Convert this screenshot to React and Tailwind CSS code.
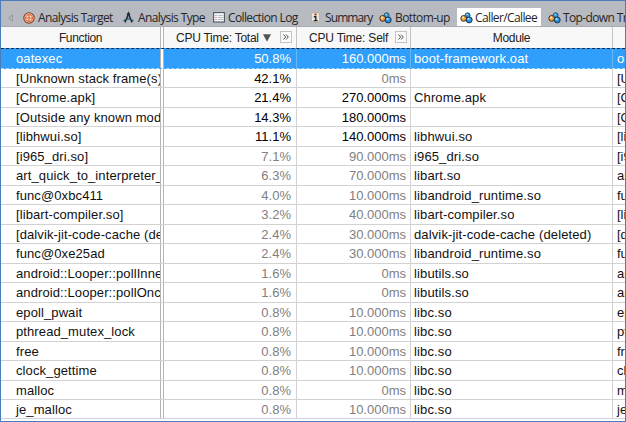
import React from "react";

const rows = [
  ["oatexec", "50.8%", "160.000ms", "boot-framework.oat"],
  ["[Unknown stack frame(s)]", "42.1%", "0ms", ""],
  ["[Chrome.apk]", "21.4%", "270.000ms", "Chrome.apk"],
  ["[Outside any known module]", "14.3%", "180.000ms", ""],
  ["[libhwui.so]", "11.1%", "140.000ms", "libhwui.so"],
  ["[i965_dri.so]", "7.1%", "90.000ms", "i965_dri.so"],
  ["art_quick_to_interpreter_bridge", "6.3%", "70.000ms", "libart.so"],
  ["func@0xbc411", "4.0%", "10.000ms", "libandroid_runtime.so"],
  ["[libart-compiler.so]", "3.2%", "40.000ms", "libart-compiler.so"],
  ["[dalvik-jit-code-cache (deleted)]", "2.4%", "30.000ms", "dalvik-jit-code-cache (deleted)"],
  ["func@0xe25ad", "2.4%", "30.000ms", "libandroid_runtime.so"],
  ["android::Looper::pollInner", "1.6%", "0ms", "libutils.so"],
  ["android::Looper::pollOnce", "1.6%", "0ms", "libutils.so"],
  ["epoll_pwait", "0.8%", "10.000ms", "libc.so"],
  ["pthread_mutex_lock", "0.8%", "10.000ms", "libc.so"],
  ["free", "0.8%", "10.000ms", "libc.so"],
  ["clock_gettime", "0.8%", "10.000ms", "libc.so"],
  ["malloc", "0.8%", "0ms", "libc.so"],
  ["je_malloc", "0.8%", "10.000ms", "libc.so"],
];

const GRID = "grid grid-cols-[163px_133px_114px_202px_12px]";

function TargetIcon() {
  return (
    <svg width="12" height="12" viewBox="0 0 12 12" fill="none">
      <circle cx="6" cy="6" r="5.2" fill="#fbe9dd" stroke="#7d3a24" strokeWidth="1.1" />
      <circle cx="6" cy="6" r="3.4" stroke="#e8703f" strokeWidth="1.2" />
      <path d="M6 1.2v9.6M1.2 6h9.6" stroke="#dd6233" strokeWidth="1.1" />
    </svg>
  );
}

function CompassIcon() {
  return (
    <svg width="11" height="13" viewBox="0 0 11 13" fill="none">
      <path d="M5.5 0.8v2" stroke="#222" strokeWidth="1.3" />
      <path d="M5.5 3L2 11.4M5.5 3l3.5 8.4" stroke="#20262c" strokeWidth="1.5" />
      <circle cx="5.5" cy="3.4" r="1.7" fill="#27323b" />
      <path d="M0.6 10Q5.5 5.8 10.4 10" stroke="#28566e" strokeWidth="1.2" />
    </svg>
  );
}

function LogIcon() {
  return (
    <svg width="12" height="11" viewBox="0 0 12 11" fill="none">
      <rect x="0.6" y="0.6" width="10.8" height="9.4" fill="#f4f6f7" stroke="#4c5864" strokeWidth="1.1" />
      <path d="M2.2 3.5h1.6M2.2 5.5h1.6M2.2 7.5h1.6" stroke="#d29386" />
      <path d="M5 3.5h5M5 5.5h5M5 7.5h5" stroke="#b4c0c9" />
    </svg>
  );
}

function InfoIcon() {
  return (
    <svg width="9" height="11" viewBox="0 0 9 11" fill="none">
      <rect x="0.6" y="0.6" width="7.8" height="9.4" rx="1.5" fill="#eee9df" stroke="#b3a994" strokeWidth="0.8" />
      <circle cx="4.5" cy="2.4" r="1.2" fill="#a94d1d" />
      <path d="M2.8 4.7h2v3.8M2.6 8.6h4" stroke="#22252a" strokeWidth="1.4" />
    </svg>
  );
}

function BallsIcon() {
  return (
    <svg width="13" height="12" viewBox="0 0 13 12" fill="none">
      <circle cx="7.6" cy="3.3" r="2.5" fill="#2f9fe0" stroke="#1a3c58" strokeWidth="0.8" />
      <circle cx="3.7" cy="6.4" r="2.9" fill="#f0a040" stroke="#33241a" strokeWidth="0.9" />
      <circle cx="9.2" cy="7.9" r="3" fill="#2b8fdc" stroke="#102e48" strokeWidth="0.9" />
      <circle cx="3.1" cy="5.6" r="1.1" fill="#ffe9b8" />
      <circle cx="8.5" cy="7" r="1.1" fill="#b8e8fb" />
      <circle cx="7" cy="2.6" r="0.8" fill="#a4e0f6" />
    </svg>
  );
}

function Tab({ icon, label, className, iconClass }) {
  return (
    <div className={"flex h-[19px] shrink-0 items-center whitespace-nowrap " + className}>
      <span className={"flex shrink-0 items-center " + iconClass}>{icon}</span>
      <span className="leading-[19px]">{label}</span>
    </div>
  );
}

function Expand() {
  return (
    <span className="flex h-[12px] w-[12px] shrink-0 items-center justify-center border border-[#c4c4c4] bg-[#fafafa]">
      <svg width="6" height="6" viewBox="0 0 6 6" fill="none" stroke="#555" strokeWidth="1">
        <path d="M0.5 0.5L2.7 3L0.5 5.5M3.1 0.5L5.3 3L3.1 5.5" />
      </svg>
    </span>
  );
}

function Row({ row, selected }) {
  const [name, total, self, module] = row;
  const totalColor = selected ? "" : parseFloat(total) > 10 ? "text-black" : "text-[#808080]";
  const selfColor = selected ? "" : parseFloat(self) > 100 ? "text-black" : "text-[#808080]";
  const line = selected ? "border-[#68b8f4]" : "border-[#d2d2d2]";
  return (
    <div
      className={
        GRID +
        " shrink-0 whitespace-nowrap text-[13px] leading-[19px] " +
        (selected
          ? "h-[21px] border-y border-dashed border-t-[#0f2a44] border-b-[#a5d5f8] bg-[#2f9ffb] text-white"
          : "h-[19.47px] border-b border-[#d2d2d2] text-[#111]")
      }
    >
      <div className="flex overflow-hidden">
        <div className="w-[159px] overflow-hidden pl-[15px] tracking-[0.1px]">{name}</div>
        <div className="w-[4px] shrink-0 border-x border-solid border-[#b4b4b4] bg-white" />
      </div>
      <div className={"overflow-hidden border-r border-solid pr-[5px] text-right " + line + " " + totalColor}>{total}</div>
      <div className={"overflow-hidden border-r border-solid pr-[4px] text-right " + line + " " + selfColor}>{self}</div>
      <div className={"overflow-hidden border-r border-solid pl-[3px] tracking-[0.13px] " + line}>{module}</div>
      <div className="overflow-hidden pl-[4px]">{name}</div>
    </div>
  );
}

export default function App() {
  return (
    <div className="flex h-[422px] w-[626px] flex-col overflow-hidden border border-[#4a7ebb] bg-white font-['Liberation_Sans',Arial,sans-serif]">
      <div className="flex h-[26px] shrink-0 overflow-hidden border-b border-[#a9acb2] bg-[#b7bac1] pt-[7px] font-['Open_Sans','Noto_Sans',sans-serif] text-[12px] tracking-[-0.62px] text-[#262626]">
        <div className="flex h-[19px] w-[22px] shrink-0 items-center pl-[7px]">
          <svg width="5" height="8" viewBox="0 0 5 8" fill="none" stroke="#8b8e94" strokeWidth="0.8">
            <path d="M4.4 0.8v6.4L0.6 4z" />
          </svg>
        </div>
        <Tab icon={<TargetIcon />} label="Analysis Target" className="w-[100px]" iconClass="w-[15px]" />
        <Tab icon={<CompassIcon />} label="Analysis Type" className="w-[90px]" iconClass="w-[15px]" />
        <Tab icon={<LogIcon />} label="Collection Log" className="w-[98px]" iconClass="w-[15px]" />
        <Tab icon={<InfoIcon />} label="Summary" className="w-[68px] tracking-[-0.9px]" iconClass="w-[14px]" />
        <Tab icon={<BallsIcon />} label="Bottom-up" className="w-[78px]" iconClass="w-[16px]" />
        <Tab icon={<BallsIcon />} label="Caller/Callee" className="h-[18px] w-[84px] bg-white pl-[3px]" iconClass="w-[15px]" />
        <Tab icon={<BallsIcon />} label="Top-down Tree" className="pl-[7px]" iconClass="w-[15px]" />
      </div>
      <div className={GRID + " h-[21px] shrink-0 whitespace-nowrap bg-[#f8f8f8] text-[12px] leading-[23px] tracking-[-0.35px] text-[#222]"}>
        <div className="flex">
          <div className="w-[159px] text-center">Function</div>
          <div className="w-[4px] shrink-0 border-x border-[#b4b4b4] bg-white" />
        </div>
        <div className="flex border-r border-[#c4c4c4] pl-[12px]">
          <span className="w-[87px] tracking-[-0.25px]">CPU Time: Total</span>
          <svg className="mt-[7px] mr-[9px] shrink-0" width="8" height="8" viewBox="0 0 8 8" fill="#555">
            <path d="M0 0.3h8L4 7.7z" />
          </svg>
          <div className="pt-[4px]">
            <Expand />
          </div>
        </div>
        <div className="flex border-r border-[#c4c4c4] pl-[12px]">
          <span className="w-[86px] tracking-[-0.2px]">CPU Time: Self</span>
          <div className="pt-[4px]">
            <Expand />
          </div>
        </div>
        <div className="border-r border-[#c4c4c4] text-center">Module</div>
        <div />
      </div>
      {rows.map((row, i) => (
        <Row key={row[0]} row={row} selected={i === 0} />
      ))}
    </div>
  );
}
